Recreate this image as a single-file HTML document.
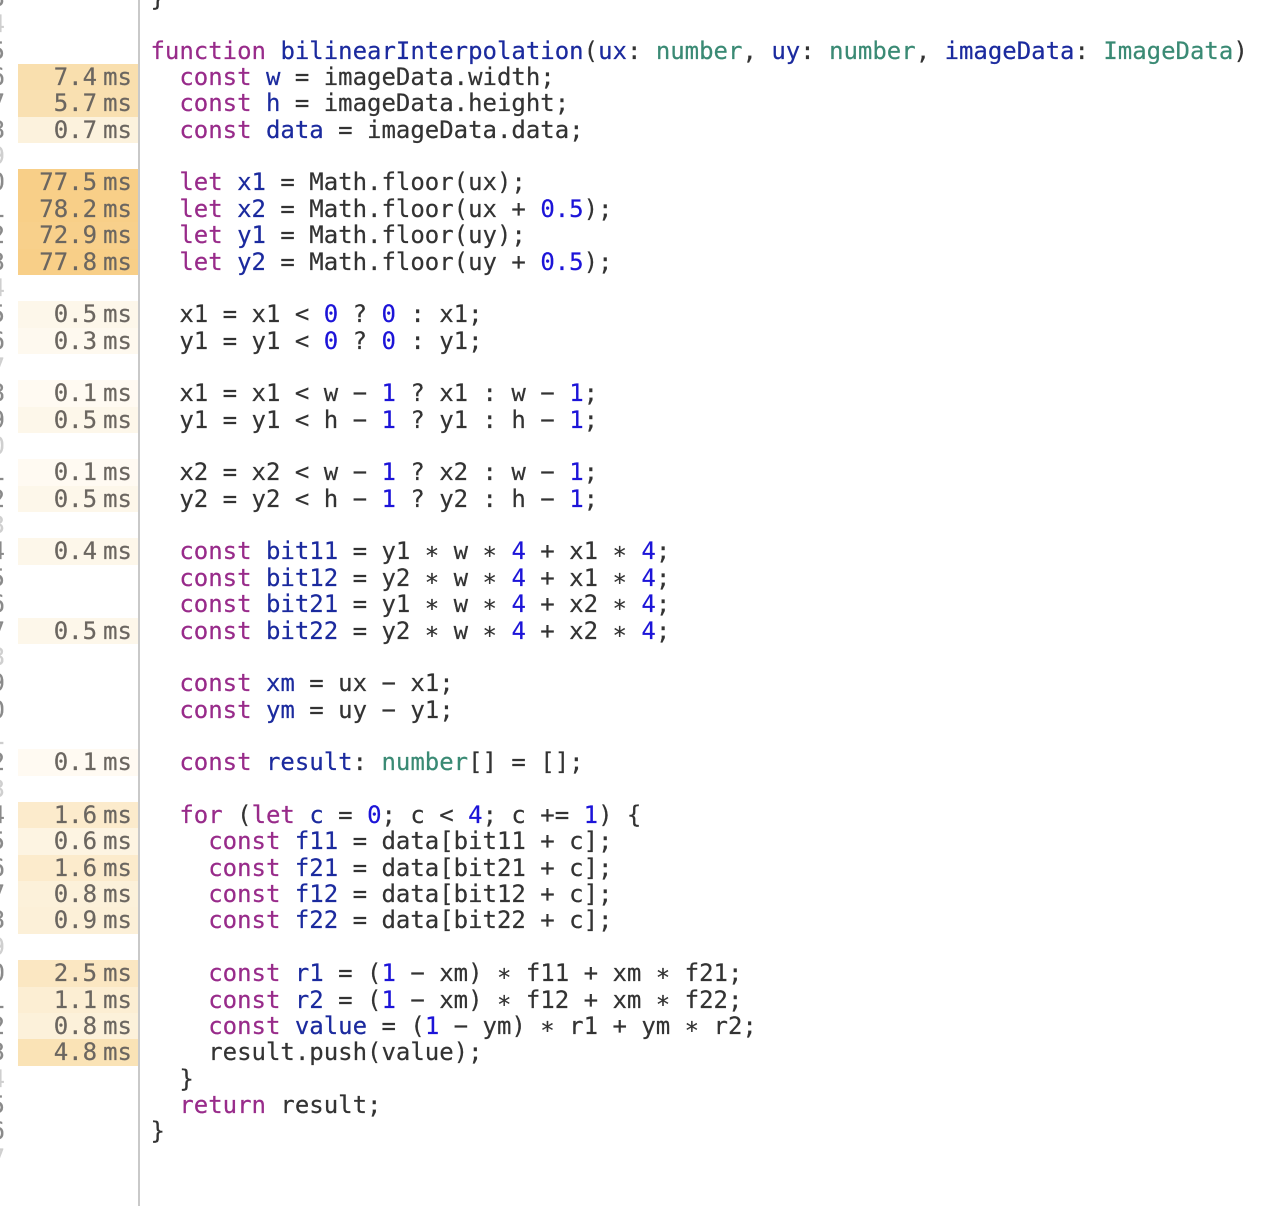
<!DOCTYPE html>
<html lang="en">
<head>
<meta charset="utf-8">
<title>Profile</title>
<style>
html,body{margin:0;padding:0;background:#fff;width:1262px;height:1206px;overflow:hidden}
body{position:relative;font-family:"DejaVu Sans Mono","Liberation Mono",monospace;font-size:24px;color:#333;-webkit-text-stroke:0.2px currentColor}
.col{position:absolute;top:-15.1px}
.col div{height:26.37px;line-height:26.37px;white-space:pre}
#nums{left:-40px;width:45px;text-align:right;color:#8a8a8a}
#nums .l{color:#cfcfcf}
#heat{left:18px;width:120px;color:#6b6660;text-align:right}
#heat div{padding-right:6px;box-sizing:border-box}
#heat i{font-style:normal;margin-left:6px}
#rule{position:absolute;left:138px;top:0;width:2px;height:1206px;background:#c9c9c9}
#code{left:150.5px;letter-spacing:-0.012px}
.k{color:#982b8a}.v{color:#1b2a9e}.t{color:#3a8a74}.n{color:#1c14d8}
</style>
</head>
<body>
<div class="col" id="nums"><div>33</div><div class="l">34</div><div>35</div><div>36</div><div>37</div><div>38</div><div class="l">39</div><div>40</div><div>41</div><div>42</div><div>43</div><div class="l">44</div><div>45</div><div>46</div><div class="l">47</div><div>48</div><div>49</div><div class="l">50</div><div>51</div><div>52</div><div class="l">53</div><div>54</div><div>55</div><div>56</div><div>57</div><div class="l">58</div><div>59</div><div>60</div><div class="l">61</div><div>62</div><div class="l">63</div><div>64</div><div>65</div><div>66</div><div>67</div><div>68</div><div class="l">69</div><div>70</div><div>71</div><div>72</div><div>73</div><div class="l">74</div><div>75</div><div>76</div><div class="l">77</div></div>
<div class="col" id="heat">
<div></div><div></div><div></div>
<div style="background:#f9dfae">7.4<i>ms</i></div>
<div style="background:#f9e0b1">5.7<i>ms</i></div>
<div style="background:#fcf2dd">0.7<i>ms</i></div>
<div></div>
<div style="background:#f8cf88">77.5<i>ms</i></div>
<div style="background:#f8cf88">78.2<i>ms</i></div>
<div style="background:#f8d08b">72.9<i>ms</i></div>
<div style="background:#f8cf88">77.8<i>ms</i></div>
<div></div>
<div style="background:#fdf7ea">0.5<i>ms</i></div>
<div style="background:#fef9ef">0.3<i>ms</i></div>
<div></div>
<div style="background:#fffaf2">0.1<i>ms</i></div>
<div style="background:#fdf7ea">0.5<i>ms</i></div>
<div></div>
<div style="background:#fffaf2">0.1<i>ms</i></div>
<div style="background:#fdf7ea">0.5<i>ms</i></div>
<div></div>
<div style="background:#fdf7ea">0.4<i>ms</i></div>
<div></div><div></div>
<div style="background:#fdf7ea">0.5<i>ms</i></div>
<div></div><div></div><div></div><div></div>
<div style="background:#fffaf2">0.1<i>ms</i></div>
<div></div>
<div style="background:#fcebcc">1.6<i>ms</i></div>
<div style="background:#fdf4e2">0.6<i>ms</i></div>
<div style="background:#fcebcc">1.6<i>ms</i></div>
<div style="background:#fcf1da">0.8<i>ms</i></div>
<div style="background:#fcf0d8">0.9<i>ms</i></div>
<div></div>
<div style="background:#fbe7c2">2.5<i>ms</i></div>
<div style="background:#fceed3">1.1<i>ms</i></div>
<div style="background:#fcf1da">0.8<i>ms</i></div>
<div style="background:#fae3b6">4.8<i>ms</i></div>
</div>
<div id="rule"></div>
<div class="col" id="code"><div>}</div><div></div><div><span class="k">function</span> <span class="v">bilinearInterpolation</span>(<span class="v">ux</span>: <span class="t">number</span>, <span class="v">uy</span>: <span class="t">number</span>, <span class="v">imageData</span>: <span class="t">ImageData</span>)</div>
<div>  <span class="k">const</span> <span class="v">w</span> = imageData.width;</div>
<div>  <span class="k">const</span> <span class="v">h</span> = imageData.height;</div>
<div>  <span class="k">const</span> <span class="v">data</span> = imageData.data;</div>
<div></div>
<div>  <span class="k">let</span> <span class="v">x1</span> = Math.floor(ux);</div>
<div>  <span class="k">let</span> <span class="v">x2</span> = Math.floor(ux + <span class="n">0.5</span>);</div>
<div>  <span class="k">let</span> <span class="v">y1</span> = Math.floor(uy);</div>
<div>  <span class="k">let</span> <span class="v">y2</span> = Math.floor(uy + <span class="n">0.5</span>);</div>
<div></div>
<div>  x1 = x1 &lt; <span class="n">0</span> ? <span class="n">0</span> : x1;</div>
<div>  y1 = y1 &lt; <span class="n">0</span> ? <span class="n">0</span> : y1;</div>
<div></div>
<div>  x1 = x1 &lt; w − <span class="n">1</span> ? x1 : w − <span class="n">1</span>;</div>
<div>  y1 = y1 &lt; h − <span class="n">1</span> ? y1 : h − <span class="n">1</span>;</div>
<div></div>
<div>  x2 = x2 &lt; w − <span class="n">1</span> ? x2 : w − <span class="n">1</span>;</div>
<div>  y2 = y2 &lt; h − <span class="n">1</span> ? y2 : h − <span class="n">1</span>;</div>
<div></div>
<div>  <span class="k">const</span> <span class="v">bit11</span> = y1 ∗ w ∗ <span class="n">4</span> + x1 ∗ <span class="n">4</span>;</div>
<div>  <span class="k">const</span> <span class="v">bit12</span> = y2 ∗ w ∗ <span class="n">4</span> + x1 ∗ <span class="n">4</span>;</div>
<div>  <span class="k">const</span> <span class="v">bit21</span> = y1 ∗ w ∗ <span class="n">4</span> + x2 ∗ <span class="n">4</span>;</div>
<div>  <span class="k">const</span> <span class="v">bit22</span> = y2 ∗ w ∗ <span class="n">4</span> + x2 ∗ <span class="n">4</span>;</div>
<div></div>
<div>  <span class="k">const</span> <span class="v">xm</span> = ux − x1;</div>
<div>  <span class="k">const</span> <span class="v">ym</span> = uy − y1;</div>
<div></div>
<div>  <span class="k">const</span> <span class="v">result</span>: <span class="t">number</span>[] = [];</div>
<div></div>
<div>  <span class="k">for</span> (<span class="k">let</span> <span class="v">c</span> = <span class="n">0</span>; c &lt; <span class="n">4</span>; c += <span class="n">1</span>) {</div>
<div>    <span class="k">const</span> <span class="v">f11</span> = data[bit11 + c];</div>
<div>    <span class="k">const</span> <span class="v">f21</span> = data[bit21 + c];</div>
<div>    <span class="k">const</span> <span class="v">f12</span> = data[bit12 + c];</div>
<div>    <span class="k">const</span> <span class="v">f22</span> = data[bit22 + c];</div>
<div></div>
<div>    <span class="k">const</span> <span class="v">r1</span> = (<span class="n">1</span> − xm) ∗ f11 + xm ∗ f21;</div>
<div>    <span class="k">const</span> <span class="v">r2</span> = (<span class="n">1</span> − xm) ∗ f12 + xm ∗ f22;</div>
<div>    <span class="k">const</span> <span class="v">value</span> = (<span class="n">1</span> − ym) ∗ r1 + ym ∗ r2;</div>
<div>    result.push(value);</div>
<div>  }</div>
<div>  <span class="k">return</span> result;</div>
<div>}</div>
</div>
</body>
</html>
